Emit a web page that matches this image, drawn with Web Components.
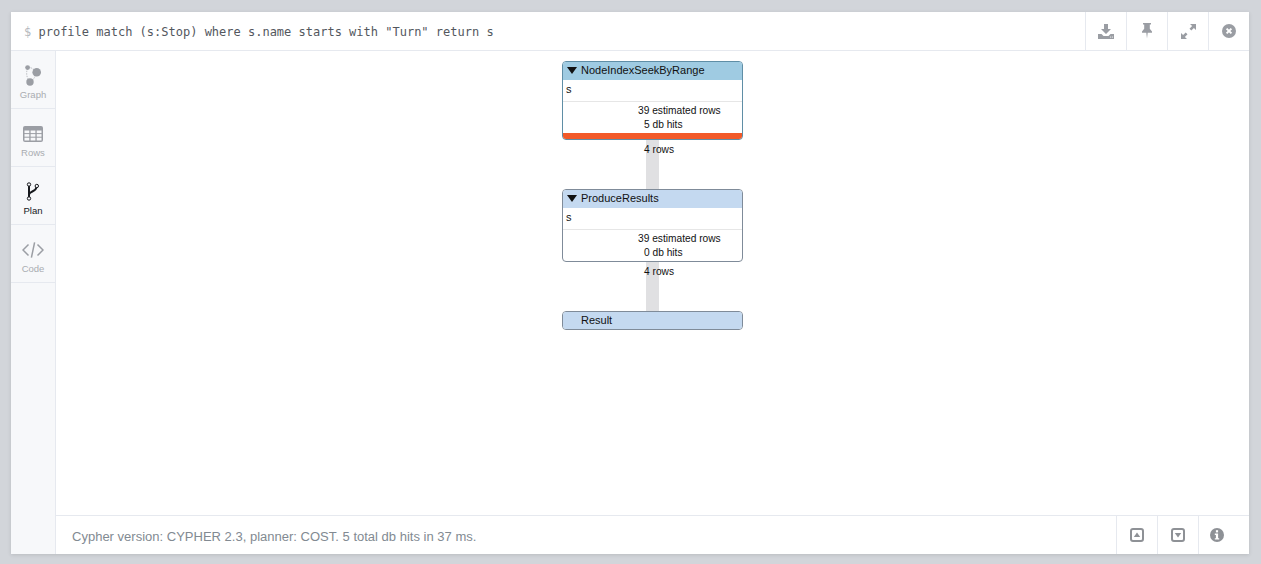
<!DOCTYPE html>
<html>
<head>
<meta charset="utf-8">
<style>
html, body { margin: 0; height: 100%; }
body { background: #d2d5da; padding: 12px 12px 10px 11px; box-sizing: border-box; overflow: hidden; font-family: "Liberation Sans", sans-serif; }
</style>
</head>
<body>
<query-frame>
  <frame-button slot="actions" icon="download"></frame-button>
  <frame-button slot="actions" icon="pin"></frame-button>
  <frame-button slot="actions" icon="expand"></frame-button>
  <frame-button slot="actions" icon="close"></frame-button>

  <side-tab slot="tabs" icon="graph" label="Graph"></side-tab>
  <side-tab slot="tabs" icon="rows" label="Rows"></side-tab>
  <side-tab slot="tabs" icon="plan" label="Plan" active></side-tab>
  <side-tab slot="tabs" icon="code" label="Code"></side-tab>

  <plan-view>
    <plan-operator name="NodeIndexSeekByRange" tint="#9fcbe2" border="#5f8ea6" identifiers="s" estimated="39 estimated rows" hits="5 db hits" hot></plan-operator>
    <plan-link rows="4 rows" length="49"></plan-link>
    <plan-operator name="ProduceResults" tint="#c4d9f0" border="#7f8b99" identifiers="s" estimated="39 estimated rows" hits="0 db hits"></plan-operator>
    <plan-link rows="4 rows" length="49"></plan-link>
    <plan-operator name="Result" tint="#c4d9f0" border="#7f8b99"></plan-operator>
  </plan-view>

  <span slot="status">Cypher version: CYPHER 2.3, planner: COST. 5 total db hits in 37 ms.</span>
  <frame-button slot="status-actions" icon="up" small></frame-button>
  <frame-button slot="status-actions" icon="down" small></frame-button>
  <frame-button slot="status-actions" icon="info" small last></frame-button>
</query-frame>

<script>
const icons = {
    download: `<svg width="16" height="15" viewBox="0 0 16 15"><path fill="currentColor" d="M6 0h4v5h3l-5 5-5-5h3zM0 10h3.5l2 2h5l2-2H16v5H0z"/><circle cx="12.6" cy="13" r=".6" fill="#fff"/><circle cx="14.4" cy="13" r=".6" fill="#fff"/></svg>`,
    pin: `<svg width="12" height="16" viewBox="0 0 12 16"><path fill="currentColor" d="M2 0h8v1.6H8.8v4.2L11 8.4v1.4H6.7L6 15.5 5.3 9.8H1V8.4l2.2-2.6V1.6H2z"/></svg>`,
    expand: `<svg width="15" height="15" viewBox="0 0 15 15"><path fill="currentColor" d="M9 0h6v6l-2.1-2.1-2.6 2.6-1.8-1.8 2.6-2.6zM0 15V9l2.1 2.1 2.6-2.6 1.8 1.8-2.6 2.6L6 15z"/></svg>`,
    close: `<svg width="14" height="14" viewBox="0 0 14 14"><circle cx="7" cy="7" r="7" fill="currentColor"/><path d="M4.6 4.6l4.8 4.8M9.4 4.6l-4.8 4.8" stroke="#fff" stroke-width="2"/></svg>`,
    up: `<svg width="14" height="14" viewBox="0 0 14 14"><rect x="1" y="1" width="12" height="12" rx="2" fill="none" stroke="currentColor" stroke-width="2"/><path fill="currentColor" d="M7 4.5L10.2 9H3.8z"/></svg>`,
    down: `<svg width="14" height="14" viewBox="0 0 14 14"><rect x="1" y="1" width="12" height="12" rx="2" fill="none" stroke="currentColor" stroke-width="2"/><path fill="currentColor" d="M3.8 5h6.4L7 9.5z"/></svg>`,
    info: `<svg width="14" height="14" viewBox="0 0 14 14"><circle cx="7" cy="7" r="7" fill="currentColor"/><rect x="5.9" y="2.2" width="2.2" height="2.2" fill="#fff"/><path fill="#fff" d="M4.8 5.6h3.3v4.6h1.1v1.4H4.8v-1.4h1.1V7H4.8z"/></svg>`,
    graph: `<svg width="20" height="24" viewBox="0 0 20 24"><path d="M5 3.5Q9 3 13.5 8M4.5 4Q2 12 7 18M7 18Q11 16 13.5 9" fill="none" stroke="currentColor" stroke-width=".7" stroke-dasharray="1.4 1.2"/><circle cx="4.6" cy="3.6" r="2.4" fill="currentColor"/><circle cx="13.7" cy="8.3" r="4.3" fill="currentColor"/><circle cx="7" cy="18" r="3.7" fill="currentColor"/></svg>`,
    rows: `<svg width="20" height="16" viewBox="0 0 20 16"><rect width="20" height="16" rx="2" fill="currentColor"/><g fill="#f7f8fa"><rect x="1.5" y="4.5" width="4.8" height="2.6"/><rect x="7.6" y="4.5" width="4.8" height="2.6"/><rect x="13.7" y="4.5" width="4.8" height="2.6"/><rect x="1.5" y="8.1" width="4.8" height="2.6"/><rect x="7.6" y="8.1" width="4.8" height="2.6"/><rect x="13.7" y="8.1" width="4.8" height="2.6"/><rect x="1.5" y="11.7" width="4.8" height="2.8"/><rect x="7.6" y="11.7" width="4.8" height="2.8"/><rect x="13.7" y="11.7" width="4.8" height="2.8"/></g></svg>`,
    plan: `<svg width="14" height="20" viewBox="0 0 14 20"><path d="M3 3v13M3 12.5C4 8.5 10 10.5 10.7 4.5" fill="none" stroke="currentColor" stroke-width="2"/><g fill="#f7f8fa" stroke="currentColor" stroke-width="1"><circle cx="3" cy="2.5" r="1.7"/><circle cx="10.8" cy="4" r="1.7"/><circle cx="3" cy="16.5" r="1.7"/></g></svg>`,
    code: `<svg width="22" height="16" viewBox="0 0 22 16"><path d="M6.5 2.5L1 8l5.5 5.5M15.5 2.5L21 8l-5.5 5.5M12.6 .3L9.4 15.7" fill="none" stroke="currentColor" stroke-width="1.5"/></svg>`
};

class QueryFrame extends HTMLElement {
    constructor() {
        super();
        this.attachShadow({mode: 'open'}).innerHTML = `
<style>
:host { display: grid; grid-template-columns: 45px 1fr; grid-template-rows: 39px 1fr 39px; height: 100%; background: #fff; box-shadow: 0 1px 4px rgba(0,0,0,.12); }
.head { grid-column: 1 / 3; display: flex; align-items: center; border-bottom: 1px solid #e6e9ef; box-sizing: border-box; }
.command { flex: 1; padding: 2px 0 0 13px; font: 12px/36px "DejaVu Sans Mono", monospace; color: #53575e; white-space: pre; }
.command b { font-weight: normal; color: #b5b8bd; }
.tabs { background: #f7f8fa; border-right: 1px solid #e6e9ef; grid-row: 2 / 4; display: flex; flex-direction: column; box-sizing: border-box; }
.main { overflow: hidden; }
.foot { display: flex; align-items: center; border-top: 1px solid #e6e9ef; box-sizing: border-box; }
.status { flex: 1; padding: 3px 0 0 16px; font: 13.03px "Liberation Sans", sans-serif; color: #828a92; }
.actions { display: flex; align-self: stretch; }
</style>
<div class="head"><div class="command"><b>$</b> profile match (s:Stop) where s.name starts with "Turn" return s</div><div class="actions"><slot name="actions"></slot></div></div>
<div class="tabs"><slot name="tabs"></slot></div>
<div class="main"><slot></slot></div>
<div class="foot"><div class="status"><slot name="status"></slot></div><div class="actions"><slot name="status-actions"></slot></div></div>`;
    }
}

class FrameButton extends HTMLElement {
    constructor() {
        super();
        this.attachShadow({mode: 'open'}).innerHTML = `
<style>
:host { display: flex; align-items: center; justify-content: center; width: 41px; box-sizing: border-box; border-left: 1px solid #e6e9ef; color: #9a9da3; }
:host([small]) { color: #8e9196; }
:host([last]) { width: 51px; justify-content: flex-start; padding-left: 11px; }
svg { display: block; }
</style>${icons[this.getAttribute('icon')]}`;
    }
}

class SideTab extends HTMLElement {
    constructor() {
        super();
        this.attachShadow({mode: 'open'}).innerHTML = `
<style>
:host { display: flex; flex-direction: column; align-items: center; height: 58px; box-sizing: border-box; border-bottom: 1px solid #e6e9ef; padding-top: 13px; color: #9b9ea4; }
:host([active]) { color: #16181c; }
.icon { height: 24px; display: flex; align-items: center; justify-content: center; }
.label { font: 9.5px/13px "Liberation Sans", sans-serif; }
:host(:not([active])) .label { color: #a9acb1; }
svg { display: block; }
</style>
<div class="icon">${icons[this.getAttribute('icon')]}</div>
<div class="label">${this.getAttribute('label')}</div>`;
    }
}

class PlanView extends HTMLElement {
    constructor() {
        super();
        this.attachShadow({mode: 'open'}).innerHTML = `
<style>
:host { display: flex; flex-direction: column; align-items: center; padding-top: 10px; font: 10.2px "Liberation Sans", Arial, sans-serif; color: #111; }
</style>
<slot></slot>`;
    }
}

class PlanOperator extends HTMLElement {
    constructor() {
        super();
        const name = this.getAttribute('name');
        const identifiers = this.getAttribute('identifiers');
        const body = identifiers ? `
<div class="ids">${identifiers}</div>
<div class="stats"><div class="est">${this.getAttribute('estimated')}</div><div class="hits">${this.getAttribute('hits')}</div></div>
${this.hasAttribute('hot') ? '<div class="bar"></div>' : ''}` : '';
        this.attachShadow({mode: 'open'}).innerHTML = `
<style>
:host { display: block; width: 181px; box-sizing: border-box; background: #fff; border: 1px solid ${this.getAttribute('border')}; border-radius: 4px; overflow: hidden; }
.title { height: 17px; background: ${this.getAttribute('tint')}; font-size: 11px; line-height: 16px; padding-left: 18px; position: relative; }
:host([identifiers]) .title { height: 18px; }
.title i { position: absolute; left: 4px; top: 5px; border: 5px solid transparent; border-top: 7px solid #111; border-bottom: 0; }
.ids { height: 21px; font-size: 11px; line-height: 19px; padding-left: 3px; border-bottom: 1px solid #e6e6e6; }
.stats { padding: 2px 0 1px; line-height: 14px; }
.est { padding-left: 75px; }
.hits { padding-left: 81px; }
.bar { height: 6px; background: #f25a29; }
</style>
<div class="title">${body ? '<i></i>' : ''}${name}</div>${body}`;
    }
}

class PlanLink extends HTMLElement {
    constructor() {
        super();
        const length = this.getAttribute('length');
        this.attachShadow({mode: 'open'}).innerHTML = `
<style>
:host { display: block; position: relative; width: 13px; height: ${length}px; background: #e0e0e2; }
span { position: absolute; left: -2px; top: 3px; white-space: nowrap; line-height: 14px; }
</style>
<span>${this.getAttribute('rows')}</span>`;
    }
}

customElements.define('query-frame', QueryFrame);
customElements.define('frame-button', FrameButton);
customElements.define('side-tab', SideTab);
customElements.define('plan-view', PlanView);
customElements.define('plan-operator', PlanOperator);
customElements.define('plan-link', PlanLink);
</script>
</body>
</html>
